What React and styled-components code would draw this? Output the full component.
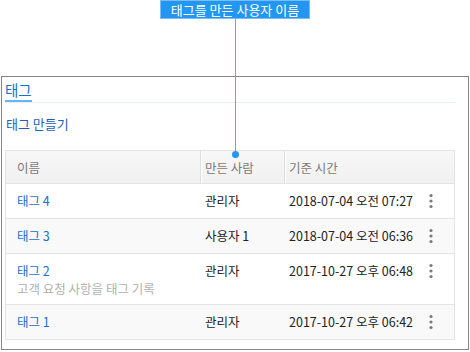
import React from "react";
import styled, { createGlobalStyle } from "styled-components";

const GlobalStyle = createGlobalStyle`
  body {
    margin: 0;
    background: #ffffff;
    font-family: "Noto Sans CJK KR", "Noto Sans", sans-serif;
  }
`;

const rows = [
  { id: 4, name: "태그 4", creator: "관리자", time: "2018-07-04 오전 07:27" },
  { id: 3, name: "태그 3", creator: "사용자 1", time: "2018-07-04 오전 06:36" },
  {
    id: 2,
    name: "태그 2",
    note: "고객 요청 사항을 태그 기록",
    creator: "관리자",
    time: "2017-10-27 오후 06:48",
  },
  { id: 1, name: "태그 1", creator: "관리자", time: "2017-10-27 오후 06:42" },
];

const KebabIcon = () => (
  <svg width="4" height="16" viewBox="0 0 4 16">
    <circle cx="2" cy="2.5" r="1.6" fill="#7a7a7a" />
    <circle cx="2" cy="8" r="1.6" fill="#7a7a7a" />
    <circle cx="2" cy="13.5" r="1.6" fill="#7a7a7a" />
  </svg>
);

const App = () => {
  return (
    <Page>
      <GlobalStyle />

      {/* Callout annotation */}
      <Callout>태그를 만든 사용자 이름</Callout>
      <Leader />
      <LeaderDot />

      <Frame>
        <TabBar>
          <Tab>태그</Tab>
        </TabBar>

        <CreateLink>태그 만들기</CreateLink>

        <Table>
          <HeadRow>
            <HeadCell>이름</HeadCell>
            <HeadCell $divider>만든 사람</HeadCell>
            <HeadCell $divider>기준 시간</HeadCell>
            <HeadCell />
          </HeadRow>

          {rows.map((row, i) => (
            <Row key={row.id} $alt={i % 2 === 1} $tall={!!row.note}>
              <NameCell>
                <TagName>{row.name}</TagName>
                {row.note && <Note>{row.note}</Note>}
              </NameCell>
              <Cell>{row.creator}</Cell>
              <Cell>{row.time}</Cell>
              <MenuCell>
                <KebabIcon />
              </MenuCell>
            </Row>
          ))}
        </Table>
      </Frame>
    </Page>
  );
};

const Page = styled.div`
  position: relative;
  width: 470px;
  height: 352px;
  padding-top: 76px;
  box-sizing: border-box;
`;

const Callout = styled.div`
  position: absolute;
  top: 0;
  left: 160px;
  width: 150px;
  height: 19px;
  box-sizing: border-box;
  background: #2196f3;
  border: 1px solid #7cbdf5;
  color: #ffffff;
  font-size: 13px;
  line-height: 17px;
  text-align: center;
  white-space: nowrap;
  z-index: 2;
`;

const Leader = styled.div`
  position: absolute;
  top: 19px;
  left: 235px;
  width: 1px;
  height: 135px;
  background: #5ea8e8;
  z-index: 2;
`;

const LeaderDot = styled.div`
  position: absolute;
  top: 151px;
  left: 232px;
  width: 7px;
  height: 7px;
  border-radius: 50%;
  background: #2196f3;
  z-index: 2;
`;

const Frame = styled.div`
  margin-left: 1px;
  width: 468px;
  height: 274px;
  box-sizing: border-box;
  border: 1px solid #858585;
  padding: 0 13px 0 3px;
`;

const TabBar = styled.div`
  display: flex;
  border-bottom: 1px solid #e3f0fc;
`;

const Tab = styled.div`
  padding-top: 3px;
  font-size: 14.5px;
  line-height: 20px;
  color: #1a6fce;
  border-bottom: 2px solid #64b5f6;
`;

const CreateLink = styled.div`
  margin: 12px 0 17px 1px;
  font-size: 13px;
  line-height: 18px;
  color: #1e5fb8;
`;

const Table = styled.div`
  border: 1px solid #e4e4e4;
  font-size: 12.5px;
`;

const gridCols = `
  display: grid;
  grid-template-columns: 194px 84px 1fr 40px;
`;

const HeadRow = styled.div`
  ${gridCols}
  height: 32px;
  background: linear-gradient(#f7f7f7, #f1f1f1);
`;

const HeadCell = styled.div`
  display: flex;
  align-items: center;
  padding-left: ${(p) => (p.$divider ? "4px" : "11px")};
  color: #7a7a7a;
  border-left: ${(p) => (p.$divider ? "1px solid #dedede" : "none")};
  box-shadow: ${(p) => (p.$divider ? "inset 1px 0 0 #ffffff" : "none")};
`;

const Row = styled.div`
  ${gridCols}
  border-top: 1px solid #e4e4e4;
  background: ${(p) => (p.$alt ? "#f9f9f9" : "#ffffff")};
  padding: ${(p) => (p.$tall ? "8px 0 7px" : "8px 0")};
  line-height: 18px;
`;

const NameCell = styled.div`
  padding-left: 11px;
  display: flex;
  flex-direction: column;
`;

const TagName = styled.div`
  color: #1a6fce;
`;

const Note = styled.div`
  color: #b0b0b0;
  line-height: 17px;
`;

const Cell = styled.div`
  padding-left: 5px;
  color: #222222;
  white-space: nowrap;
`;

const MenuCell = styled.div`
  display: flex;
  justify-content: center;
  padding-top: 1px;
  padding-right: 6px;
`;

export default App;
